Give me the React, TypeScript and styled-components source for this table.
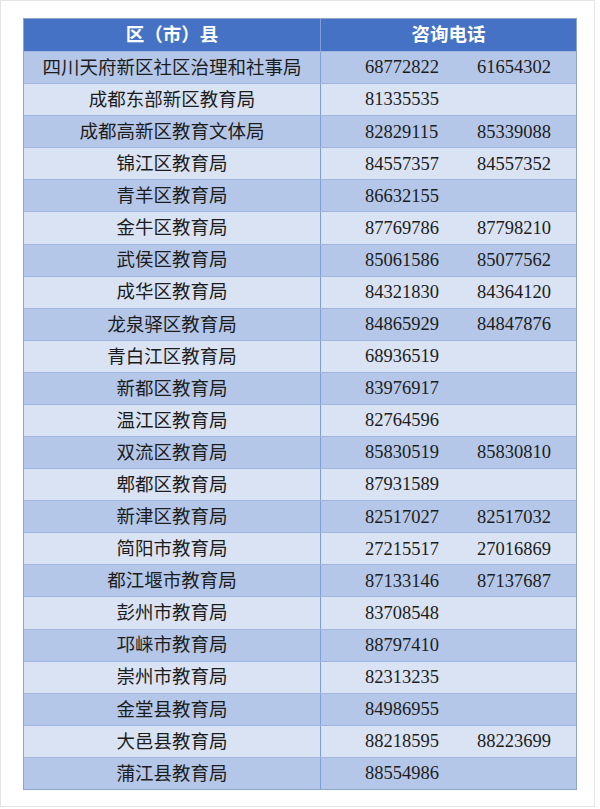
import styled, { createGlobalStyle } from 'styled-components'

const GlobalStyle = createGlobalStyle`
  html, body {
    margin: 0;
    padding: 0;
    background: #ffffff;
  }
`

// ── Frame ──────────────────────────────────────────────────────────────────────

const Frame = styled.div`
  box-sizing: border-box;
  width: 595px;
  height: 807px;
  border: 1px solid #e4e4e4;
  background: #ffffff;
  padding: 17px 0 0 22px;
`

// ── Table ──────────────────────────────────────────────────────────────────────

const Table = styled.div`
  box-sizing: border-box;
  width: 554px;
  height: 772px;
  display: grid;
  grid-template-rows: repeat(24, 1fr);
  border: 1px solid #8fa6cc;
  font-family: 'Noto Sans CJK SC', 'Noto Sans', sans-serif;
  color: #1c1c1c;
`

const Row = styled.div<{ $tone: 'head' | 'dark' | 'light' }>`
  display: grid;
  grid-template-columns: 297px 1fr;
  background: ${({ $tone }) =>
    $tone === 'head' ? '#4672c6' : $tone === 'dark' ? '#b5c7e8' : '#dae3f3'};
  border-top: ${({ $tone }) => ($tone === 'head' ? 'none' : '1px solid #9fb6de')};
  color: ${({ $tone }) => ($tone === 'head' ? '#ffffff' : '#1c1c1c')};
`

const NameCell = styled.div<{ $head?: boolean }>`
  display: flex;
  align-items: center;
  justify-content: center;
  padding-bottom: 3px;
  border-right: 1px solid #7e9fd6;
  font-size: 18.5px;
  font-weight: ${({ $head }) => ($head ? 700 : 400)};
  line-height: 1;
  white-space: nowrap;
`

const HeadCell = styled.div`
  display: flex;
  align-items: center;
  justify-content: center;
  padding-bottom: 3px;
  font-size: 18.5px;
  font-weight: 700;
  line-height: 1;
`

const PhoneCell = styled.div`
  display: grid;
  grid-template-columns: 112px 1fr;
  align-items: center;
  padding-left: 44px;
  font-family: 'Liberation Serif', 'Times New Roman', serif;
  font-size: 18.5px;
  line-height: 1;
`

// ── Data ───────────────────────────────────────────────────────────────────────

const ROWS: [string, string, string?][] = [
  ['四川天府新区社区治理和社事局', '68772822', '61654302'],
  ['成都东部新区教育局', '81335535'],
  ['成都高新区教育文体局', '82829115', '85339088'],
  ['锦江区教育局', '84557357', '84557352'],
  ['青羊区教育局', '86632155'],
  ['金牛区教育局', '87769786', '87798210'],
  ['武侯区教育局', '85061586', '85077562'],
  ['成华区教育局', '84321830', '84364120'],
  ['龙泉驿区教育局', '84865929', '84847876'],
  ['青白江区教育局', '68936519'],
  ['新都区教育局', '83976917'],
  ['温江区教育局', '82764596'],
  ['双流区教育局', '85830519', '85830810'],
  ['郫都区教育局', '87931589'],
  ['新津区教育局', '82517027', '82517032'],
  ['简阳市教育局', '27215517', '27016869'],
  ['都江堰市教育局', '87133146', '87137687'],
  ['彭州市教育局', '83708548'],
  ['邛崃市教育局', '88797410'],
  ['崇州市教育局', '82313235'],
  ['金堂县教育局', '84986955'],
  ['大邑县教育局', '88218595', '88223699'],
  ['蒲江县教育局', '88554986'],
]

// ── Page ───────────────────────────────────────────────────────────────────────

export default function App() {
  return (
    <>
      <GlobalStyle />
      <Frame>
        <Table>
          <Row $tone="head">
            <NameCell $head>区（市）县</NameCell>
            <HeadCell>咨询电话</HeadCell>
          </Row>
          {ROWS.map(([name, a, b], i) => (
            <Row key={name} $tone={i % 2 === 0 ? 'dark' : 'light'}>
              <NameCell>{name}</NameCell>
              <PhoneCell>
                <span>{a}</span>
                <span>{b ?? ''}</span>
              </PhoneCell>
            </Row>
          ))}
        </Table>
      </Frame>
    </>
  )
}
